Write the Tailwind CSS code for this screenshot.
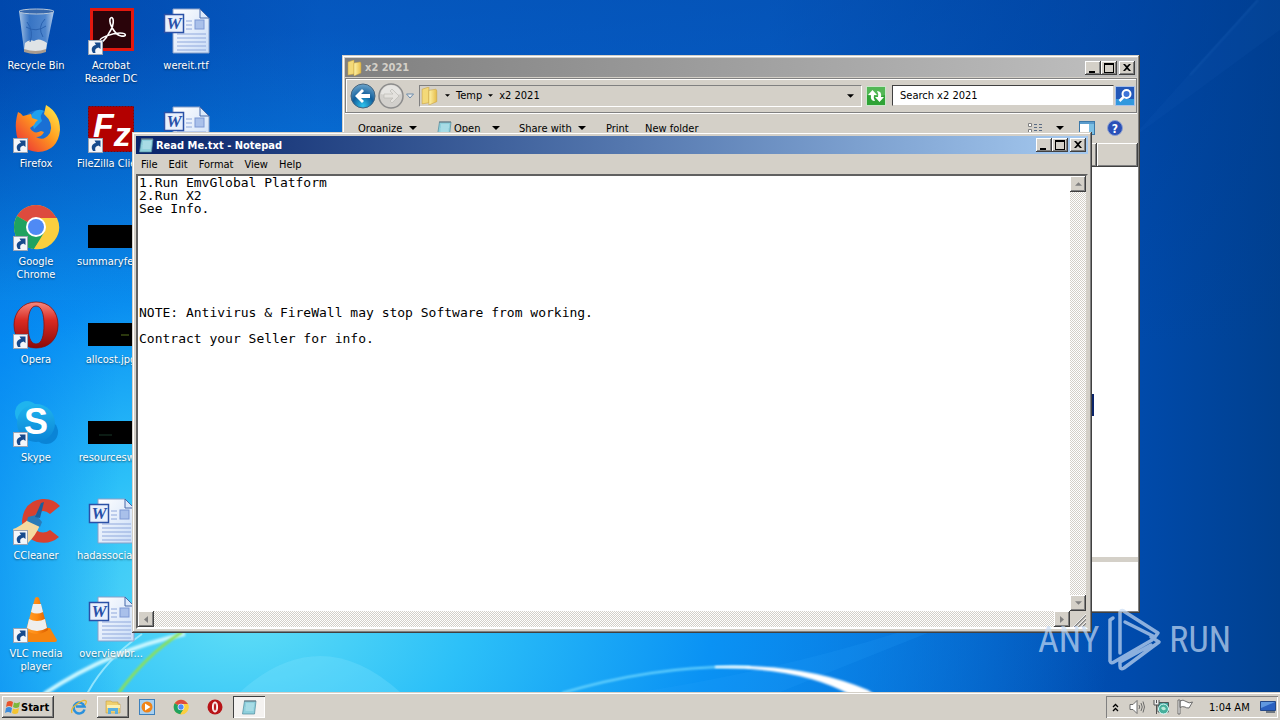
<!DOCTYPE html>
<html lang="en">
<head>
    <meta charset="UTF-8">
    <meta name="viewport" content="width=device-width, initial-scale=1.0">
    <title>Desktop</title>
    <script src="https://cdn.jsdelivr.net/npm/@tailwindcss/browser@4"></script>
    <style>
        body { font-family: 'DejaVu Sans Condensed', 'Noto Sans', sans-serif; }
    </style>
</head>
<body class="h-screen overflow-hidden flex flex-col bg-[#0a6ddc] text-[11px] leading-[13px] text-black">
    <!-- Shared icons -->
    <svg class="absolute size-0" xmlns="http://www.w3.org/2000/svg">
        <defs>
            <linearGradient id="g-opera" x1="0" y1="0" x2="0" y2="1"><stop offset="0" stop-color="#f58a80"/><stop offset=".4" stop-color="#d92a22"/><stop offset="1" stop-color="#8c0a08"/></linearGradient>
            <linearGradient id="g-page" x1="0" y1="0" x2="1" y2="1"><stop offset="0" stop-color="#ffffff"/><stop offset="1" stop-color="#c9dcf7"/></linearGradient>
            <linearGradient id="g-fox" x1="1" y1="0" x2="0" y2="1"><stop offset="0" stop-color="#fff44f"/><stop offset=".45" stop-color="#ff9a1e"/><stop offset="1" stop-color="#e8203c"/></linearGradient>
            <linearGradient id="g-glass" x1="0" y1="0" x2="1" y2="0"><stop offset="0" stop-color="#c8dcf0" stop-opacity=".85"/><stop offset=".3" stop-color="#4f86cc" stop-opacity=".7"/><stop offset=".75" stop-color="#6f9fda" stop-opacity=".7"/><stop offset="1" stop-color="#d8e8f8" stop-opacity=".85"/></linearGradient>
            <linearGradient id="g-cone" x1="0" y1="0" x2="1" y2="0"><stop offset="0" stop-color="#ffa030"/><stop offset=".5" stop-color="#ff8a10"/><stop offset="1" stop-color="#d85c00"/></linearGradient>
            <linearGradient id="g-folder" x1="0" y1="0" x2="1" y2="0"><stop offset="0" stop-color="#fff3a8"/><stop offset="1" stop-color="#e6bd4a"/></linearGradient>
            <linearGradient id="g-skype" x1="0" y1="0" x2="0" y2="1"><stop offset="0" stop-color="#1fb4ee"/><stop offset="1" stop-color="#0a84d6"/></linearGradient>
            <radialGradient id="g-back" cx=".5" cy=".9" r=".9"><stop offset="0" stop-color="#2ec4ee"/><stop offset=".5" stop-color="#125f9c"/><stop offset="1" stop-color="#6ea6cc"/></radialGradient>
        </defs>
        <symbol id="shortcut" viewBox="0 0 15 15">
            <rect x=".5" y=".5" width="14" height="14" fill="#f4f6fa" stroke="#9aa4b4"/>
            <path d="M5 13C2.500 9 4 5.500 8 5L6.500 2.500H12.500V9L10.500 7.500C7.500 8 6.500 10 7.500 13Z" fill="#174a8c"/>
        </symbol>
        <symbol id="bin" viewBox="0 0 48 48">
            <path d="M7 4L12 43Q24 48 34 43L42 4Z" fill="url(#g-glass)"/>
            <path d="M13 36Q17 32 22 34Q27 30 35 36L34 43Q24 47 12 43Z" fill="#dfe3e6"/>
            <path d="M12 42Q24 46 34 42L34 45Q24 49 12 45Z" fill="#a99c90"/>
            <ellipse cx="24.500" cy="4.500" rx="17.500" ry="2.500" fill="#3768ac" stroke="#b8c8da"/>
            <path d="M15 15Q22 24 18 35M33 12Q25 20 31 30M14 20Q24 26 34 19" stroke="#2a62b0" fill="none"/>
        </symbol>
        <symbol id="acrobat" viewBox="0 0 48 48">
            <rect x="3" y="1" width="44" height="43" fill="#e2180f"/>
            <rect x="6" y="4" width="38" height="37" fill="#2a040a"/>
            <path d="M23 12C26 7 29 16 22 26C19 32 14 37 13 34C12 31 25 26 33 26C40 26 40 30 34 29C28 28 22 17 23 12Z" fill="none" stroke="#fff" stroke-width="1.600"/>
        </symbol>
        <symbol id="word" viewBox="0 0 48 48">
            <path d="M11 2H38L47 11V46H11Z" fill="url(#g-page)" stroke="#8aa0c8"/>
            <path d="M38 2V11H47Z" fill="#dbe8fa" stroke="#4668a8"/>
            <path d="M24 14H30M24 18H30M24 22H30M15 27H44M15 31H44M15 35H44M15 39H44M15 43H44" stroke="#8fa8dc"/>
            <rect x="33" y="13" width="9" height="9" fill="#a9c0ea" stroke="#7c98d4"/>
            <rect x="2.500" y="7.500" width="19" height="18" fill="#e9f0fc" stroke="#2b51a6" stroke-width="1.500"/>
        </symbol>
        <symbol id="firefox" viewBox="0 0 48 48">
            <circle cx="27" cy="23" r="18" fill="#1a6fd4"/>
            <path d="M18 12Q24 2 32 6Q27 10 30 16L22 24Z" fill="#1fa0ee"/>
            <path d="M6 7Q9 8 11 11L19 9L20 13L26 15Q23 17 22 20L18 23Q22 30 29 26L32 27Q30 32 24 32Q32 37 38 28Q42 18 32 9L34 0Q48 8 48 25Q46 46 26 47Q5 45 4 25Q3 17 6 7Z" fill="url(#g-fox)"/>
        </symbol>
        <symbol id="filezilla" viewBox="0 0 48 48">
            <rect x="1.500" y="1.500" width="45" height="45" fill="#b30000" stroke="#8a0000" stroke-dasharray="2 1"/>
        </symbol>
        <symbol id="chrome" viewBox="0 0 48 48">
            <circle cx="24" cy="24" r="22" fill="#fbcf3f"/>
            <path d="M24 24L5 13A22 22 0 0 1 43 13L45 15H24Z" fill="#dd4b3e"/>
            <path d="M24 24L5 13A22 22 0 0 0 22 46L34 29Z" fill="#1fa260"/>
            <path d="M33 28L22 46A22 22 0 0 0 45 15H25Z" fill="#fbcf3f"/>
            <circle cx="24" cy="24" r="10" fill="#fff"/>
            <circle cx="24" cy="24" r="8" fill="#4f8af5"/>
        </symbol>
        <symbol id="opera" viewBox="0 0 48 48">
            <path fill-rule="evenodd" d="M24 1C37 1 46 10 46 24S37 47 24 47S2 37 2 24S11 1 24 1ZM24 5C18 5 16 14 16 24S18 43 24 43S32 34 32 24S30 5 24 5Z" fill="url(#g-opera)" stroke="#8a100c" stroke-width=".8"/>
        </symbol>
        <symbol id="skype" viewBox="0 0 48 48">
            <circle cx="15" cy="14" r="12" fill="#1fb4ee"/>
            <circle cx="34" cy="33" r="12" fill="#0a84d6"/>
            <circle cx="24" cy="24" r="19" fill="url(#g-skype)"/>
        </symbol>
        <symbol id="ccleaner" viewBox="0 0 48 48">
            <path d="M48 9L38 17Q31 11 24 17Q18 25 24 33Q31 38 38 33L47 40Q38 48 25 45Q10 40 10 24Q12 4 30 2Q41 1 48 9Z" fill="#d8412f"/>
            <path d="M18 21Q8 30 1 32Q4 43 16 46Q24 38 28 28Z" fill="#f5d9a0"/>
            <path d="M16 20L24 18L30 25L28 30L15 24Z" fill="#2a7bb8"/>
            <path d="M23 20L29 6L32 5L28 21Z" fill="#1c5f9c"/>
        </symbol>
        <symbol id="vlc" viewBox="0 0 48 48">
            <path d="M11 33H38L45 45Q45 47 43 47H5Q3 47 4 44Z" fill="#f58410"/>
            <path d="M23 3Q25 1 27 3L36 35Q25 43 14 35Z" fill="url(#g-cone)"/>
            <path d="M21 9H29L31 17Q25 20 19 17ZM17 24Q25 28 33 24L35 33Q25 39 15 33Z" fill="#eee"/>
        </symbol>
        <symbol id="black" viewBox="0 0 48 48"><rect x="1" y="22" width="47" height="23"/></symbol>
        <symbol id="black-allcost" viewBox="0 0 48 48"><rect x="1" y="22" width="47" height="23"/><path d="M34 34H42" stroke="#56701c"/></symbol>
        <symbol id="black-resources" viewBox="0 0 48 48"><rect x="1" y="22" width="47" height="23"/><path d="M12 36H25" stroke="#183828"/></symbol>
        <symbol id="folder" viewBox="0 0 16 16">
            <path d="M1 2L7 0V14L1 15Z" fill="#f3d978" stroke="#c9a23c" stroke-width=".5"/>
            <path d="M7 3L13 2Q14 2 14 4V13L7 16Z" fill="url(#g-folder)" stroke="#c9a23c" stroke-width=".5"/>
        </symbol>
        <symbol id="notepad" viewBox="0 0 16 16">
            <path d="M3.500 2H15L13.500 15H1.500Z" fill="#8fd0dc" stroke="#4d8a9c" stroke-width=".7"/>
            <path d="M5 5H13M5 7H13M4.500 9H12.500M4.500 11H12.500" stroke="#cdeef4" stroke-width=".8"/>
            <path d="M4 1V3M6 1V3M8 1V3M10 1V3M12 1V3M14 1V3" stroke="#6b7680"/>
        </symbol>
        <symbol id="min" viewBox="0 0 14 12"><path d="M3 9H9V11H3Z"/></symbol>
        <symbol id="max" viewBox="0 0 14 12"><path fill-rule="evenodd" d="M2 1H12V11H2ZM3 3V10H11V3Z"/></symbol>
        <symbol id="close" viewBox="0 0 14 12"><path d="M3 2H5L7 4L9 2H11L8 5.500L11 9H9L7 7L5 9H3L6 5.500Z"/></symbol>
        <symbol id="down" viewBox="0 0 8 4"><path d="M0 0H8L4 4Z"/></symbol>
    </svg>

    <main class="relative flex-1 min-h-0 overflow-hidden bg-[radial-gradient(ellipse_68%_84%_at_19%_88%,#62dff6_0%,#2cc0f8_26%,#0a92f4_54%,transparent_100%),linear-gradient(90deg,#0050bd_0%,#0869da_25%,#0864d0_60%,#004bad_88%,#00408f_100%)]">
        <!-- Wallpaper light streaks -->
        <svg class="absolute inset-0 size-full" viewBox="0 0 1280 692" preserveAspectRatio="none" fill="none">
            <defs>
                <linearGradient id="g-top" x1="0" y1="0" x2="0" y2="1"><stop offset="0" stop-color="#003c94" stop-opacity=".4"/><stop offset=".5" stop-color="#003c94" stop-opacity="0"/></linearGradient>
                <linearGradient id="g-left" x1="0" y1="0" x2="1" y2="0"><stop offset="0" stop-color="#0080f0" stop-opacity=".5"/><stop offset="1" stop-color="#0080f0" stop-opacity="0"/></linearGradient>
                <filter id="soft"><feGaussianBlur stdDeviation="1"/></filter>
            </defs>
            <rect width="1280" height="692" fill="url(#g-top)"/>
            <rect y="300" width="120" height="392" fill="url(#g-left)"/>
            <path d="M1130 140L1256 0H1280V30Z" fill="#2a74cc" opacity=".08"/>
            <path d="M1190 75L1258 0" stroke="#4a90dc" opacity=".3" filter="url(#soft)"/>
            <path d="M240 692Q320 620 400 692Z" fill="#8ae8ff" opacity=".25"/>
            <path d="M640 692Q780 670 900 632H930L780 692Z" fill="#30a8ff" opacity=".15"/>
            <path d="M44 694Q110 650 185 634" stroke="#c8f6ff" stroke-width="4" filter="url(#soft)"/>
            <path d="M87 694Q105 660 142 634" stroke="#a8eeff" stroke-width="2" opacity=".8"/>
            <path d="M118 694Q145 656 182 632" stroke="#8be05c" stroke-width="3" filter="url(#soft)"/>
            <path d="M562 693Q660 664 750 667" stroke="#70d8ff" stroke-width="2" filter="url(#soft)"/>
            <path d="M715 666Q805 663 868 690L880 698H856Q805 667 715 668Z" fill="#fff" filter="url(#soft)"/>
        </svg>

        <!-- Desktop icons -->
        <ul id="desktop-icons" class="relative grid grid-flow-col grid-rows-[repeat(7,98px)] auto-cols-[72px] gap-x-[3px] justify-start pt-[7px] text-white"></ul>

        <!-- Explorer window -->
        <section class="absolute left-[342px] top-[55px] w-[798px] h-[558px] flex flex-col p-[3px] bg-[#d4d0c8] shadow-[inset_-1px_-1px_0_#404040,inset_1px_1px_0_#d4d0c8,inset_-2px_-2px_0_#808080,inset_2px_2px_0_#fff]">
            <header class="h-[19px] shrink-0 flex items-center gap-[2px] px-[2px] bg-linear-to-r from-[#808080] to-[#c0c0c0]">
                <svg class="size-4"><use href="#folder"/></svg>
                <h2 class="flex-1 font-bold text-[#d4d0c8]">x2 2021</h2>
                <button aria-label="Minimize" class="w-4 h-[14px] bg-[#d4d0c8] shadow-[inset_-1px_-1px_0_#404040,inset_1px_1px_0_#fff,inset_-2px_-2px_0_#808080]"><svg class="w-[14px] h-3 mx-auto"><use href="#min"/></svg></button>
                <button aria-label="Maximize" class="-ml-[2px] w-4 h-[14px] bg-[#d4d0c8] shadow-[inset_-1px_-1px_0_#404040,inset_1px_1px_0_#fff,inset_-2px_-2px_0_#808080]"><svg class="w-[14px] h-3 mx-auto"><use href="#max"/></svg></button>
                <button aria-label="Close" class="w-4 h-[14px] bg-[#d4d0c8] shadow-[inset_-1px_-1px_0_#404040,inset_1px_1px_0_#fff,inset_-2px_-2px_0_#808080]"><svg class="w-[14px] h-3 mx-auto"><use href="#close"/></svg></button>
            </header>

            <nav class="mt-px h-[35px] shrink-0 flex items-center pl-1 pr-px border border-[#808080] shadow-[inset_1px_1px_0_#fff,0_1px_0_#fff]">
                <button aria-label="Back" class="size-[26px]"><svg viewBox="0 0 26 26"><circle cx="13" cy="13" r="12" fill="url(#g-back)" stroke="#45647e"/><path d="M5 13L12 6L14 8L11 11H20V15H11L14 18L12 20Z" fill="#fff"/></svg></button>
                <button aria-label="Forward" class="ml-[2px] size-[26px]"><svg viewBox="0 0 26 26"><circle cx="13" cy="13" r="12" fill="#d2d0cc" stroke="#8c8c8c" stroke-width="1.500"/><path d="M3 11A10 9 0 0 1 23 11Q13 14 3 11Z" fill="#e6e5e2"/><path d="M21 13L14 6L12 8L15 11H6V15H15L12 18L14 20Z" fill="#e4e2de" stroke="#bcbab5" stroke-width=".7"/></svg></button>
                <button aria-label="Recent pages" class="ml-[2px] w-2"><svg class="w-2 h-[6px]" viewBox="0 0 8 6"><path d="M.5 1H7.500L4 5Z" fill="#eee" stroke="#6c8caa"/></svg></button>
                <div class="ml-[5px] flex-1 h-[22px] flex items-center pl-px pr-[7px] border border-[#808080] border-r-[#fff] border-b-[#fff]">
                    <svg class="size-[18px]"><use href="#folder"/></svg>
                    <svg class="ml-[6px] w-[5px] h-[3px]"><use href="#down"/></svg>
                    <a href="#" class="ml-[6px]">Temp</a>
                    <svg class="ml-[6px] w-[5px] h-[3px]"><use href="#down"/></svg>
                    <a href="#" class="ml-[6px]">x2 2021</a>
                    <button aria-label="Previous locations" class="ml-auto"><svg class="w-[7px] h-1"><use href="#down"/></svg></button>
                </div>
                <button aria-label="Refresh" class="ml-1 size-5"><svg viewBox="0 0 20 20"><rect x=".5" y=".5" width="19" height="19" fill="#2fa336" stroke="#c8e6c8"/><path d="M1 1H19V9Q10 12 1 9Z" fill="#6cc46c" opacity=".6"/><path d="M9 15Q4 15 5 9H2L6.500 4L11 9H8Q7 12 9 15ZM11 5Q16 5 15 11H18L13.500 16L9 11H12Q13 8 11 5Z" fill="#fff"/></svg></button>
                <input type="text" aria-label="Search" value="Search x2 2021" class="ml-[6px] w-[222px] h-[21px] px-[7px] bg-white border border-[#404040] border-r-[#d4d0c8] border-b-[#d4d0c8] outline-none">
                <button aria-label="Go" class="ml-px size-5"><svg viewBox="0 0 20 20"><rect x=".5" y=".5" width="19" height="19" fill="#2357b8" stroke="#a8c0e8"/><path d="M1 13H19V19H1Z" fill="#38b4ee" opacity=".7"/><circle cx="11.500" cy="8" r="4" fill="#3d74d8" stroke="#fff" stroke-width="2"/><path d="M8.500 11L4.500 15" stroke="#fff" stroke-width="2.500"/></svg></button>
            </nav>

            <div class="h-[30px] shrink-0 flex items-center pl-[13px] pr-[14px]">
                <button class="w-[79px] flex items-center gap-[7px]">Organize <svg class="w-2 h-1"><use href="#down"/></svg></button>
                <button class="w-[82px] flex items-center gap-[2px]"><svg class="w-4 h-4 -ml-px"><use href="#notepad"/></svg>Open <svg class="ml-[10px] w-2 h-1"><use href="#down"/></svg></button>
                <button class="w-[87px] flex items-center gap-[6px]">Share with <svg class="w-2 h-1"><use href="#down"/></svg></button>
                <button class="w-[39px] text-left">Print</button>
                <button>New folder</button>
                <button aria-label="Views" class="ml-auto flex items-center gap-[13px]"><svg class="w-4 h-[10px]" viewBox="0 0 16 10"><path d="M1.500 .5H4.500V3.500H1.500ZM1.500 6.500H4.500V9.500H1.500Z" fill="#fff" stroke="#808080"/><path d="M7 1.500H10M12 1.500H15M7 4.500H10M12 4.500H15M7 7.500H10M12 7.500H15" stroke="#5a6c84"/></svg><svg class="w-2 h-1"><use href="#down"/></svg></button>
                <button aria-label="Preview pane" class="ml-[15px]"><svg class="w-4 h-[14px]" viewBox="0 0 16 14"><rect x=".5" y=".5" width="15" height="13" fill="#fff" stroke="#3c78a8"/><path d="M1 1H15V3H1Z" fill="#5a9ccc"/><path d="M10 3H15V13H10Z" fill="#7cc0e4"/></svg></button>
                <button aria-label="Help" class="ml-[12px] size-4"><svg viewBox="0 0 16 16"><circle cx="8" cy="8" r="7.500" fill="#2a50b8" stroke="#8ca0d0"/><text x="8" y="12.500" text-anchor="middle" font-size="12" font-weight="700" fill="#fff">?</text></svg></button>
            </div>

            <div class="-mr-px h-6 shrink-0 flex">
                <span class="w-[752px] shadow-[inset_-1px_-1px_0_#404040,inset_1px_1px_0_#fff,inset_-2px_-2px_0_#808080]"></span>
                <span class="flex-1 shadow-[inset_-1px_-1px_0_#404040,inset_1px_1px_0_#fff,inset_-2px_-2px_0_#808080]"></span>
            </div>
            <div class="-mr-px flex-1 bg-white pt-[227px]">
                <div class="w-[749px] h-[22px] bg-[#0a246a]"></div>
            </div>
            <footer class="-mr-px -mb-px h-[54px] shrink-0 bg-white border-t-[5px] border-[#d4d0c8]"></footer>
        </section>

        <!-- Notepad window -->
        <section class="absolute left-[132px] top-[132px] w-[960px] h-[501px] flex flex-col p-1 bg-[#d4d0c8] shadow-[inset_-1px_-1px_0_#404040,inset_1px_1px_0_#d4d0c8,inset_-2px_-2px_0_#808080,inset_2px_2px_0_#fff]">
            <header class="h-[18px] shrink-0 flex items-center gap-[2px] px-[2px] bg-linear-to-r from-[#0a246a] to-[#a6caf0]">
                <svg class="size-4"><use href="#notepad"/></svg>
                <h1 class="flex-1 font-bold text-white">Read Me.txt - Notepad</h1>
                <button aria-label="Minimize" class="w-4 h-[14px] bg-[#d4d0c8] shadow-[inset_-1px_-1px_0_#404040,inset_1px_1px_0_#fff,inset_-2px_-2px_0_#808080]"><svg class="w-[14px] h-3 mx-auto"><use href="#min"/></svg></button>
                <button aria-label="Maximize" class="-ml-[2px] w-4 h-[14px] bg-[#d4d0c8] shadow-[inset_-1px_-1px_0_#404040,inset_1px_1px_0_#fff,inset_-2px_-2px_0_#808080]"><svg class="w-[14px] h-3 mx-auto"><use href="#max"/></svg></button>
                <button aria-label="Close" class="w-4 h-[14px] bg-[#d4d0c8] shadow-[inset_-1px_-1px_0_#404040,inset_1px_1px_0_#fff,inset_-2px_-2px_0_#808080]"><svg class="w-[14px] h-3 mx-auto"><use href="#close"/></svg></button>
            </header>
            <nav class="h-5 shrink-0 flex items-center gap-[11px] pl-[5px]">
                <button>File</button>
                <button>Edit</button>
                <button>Format</button>
                <button>View</button>
                <button>Help</button>
            </nav>
            <div class="flex-1 min-h-0 grid grid-cols-[1fr_16px] grid-rows-[1fr_16px] border-2 border-t-[#606060] border-l-[#606060] border-r-[#d4d0c8] border-b-[#fff]">
                <textarea aria-label="Document" spellcheck="false" class="resize-none overflow-hidden whitespace-pre bg-white px-px font-['DejaVu_Sans_Mono',monospace] text-[13px] leading-[13px] outline-none">1.Run EmvGlobal Platform
2.Run X2
See Info.







NOTE: Antivirus &amp; FireWall may stop Software from working.

Contract your Seller for info.</textarea>
                <div class="flex flex-col justify-between bg-[repeating-conic-gradient(#ffffff_0_25%,#d4d0c8_0_50%)] bg-[length:2px_2px]">
                    <button aria-label="Scroll up" class="size-4 grid place-items-center bg-[#d4d0c8] shadow-[inset_-1px_-1px_0_#404040,inset_1px_1px_0_#fff,inset_-2px_-2px_0_#808080]"><svg class="w-[7px] h-1 rotate-180 fill-[#808080]"><use href="#down"/></svg></button>
                    <button aria-label="Scroll down" class="size-4 grid place-items-center bg-[#d4d0c8] shadow-[inset_-1px_-1px_0_#404040,inset_1px_1px_0_#fff,inset_-2px_-2px_0_#808080]"><svg class="w-[7px] h-1 fill-[#808080]"><use href="#down"/></svg></button>
                </div>
                <div class="flex justify-between bg-[repeating-conic-gradient(#ffffff_0_25%,#d4d0c8_0_50%)] bg-[length:2px_2px]">
                    <button aria-label="Scroll left" class="size-4 grid place-items-center bg-[#d4d0c8] shadow-[inset_-1px_-1px_0_#404040,inset_1px_1px_0_#fff,inset_-2px_-2px_0_#808080]"><svg class="w-1 h-[7px]" viewBox="0 0 4 7"><path d="M4 0V7L0 3.500Z" fill="#808080"/></svg></button>
                    <button aria-label="Scroll right" class="size-4 grid place-items-center bg-[#d4d0c8] shadow-[inset_-1px_-1px_0_#404040,inset_1px_1px_0_#fff,inset_-2px_-2px_0_#808080]"><svg class="w-1 h-[7px]" viewBox="0 0 4 7"><path d="M0 0V7L4 3.500Z" fill="#808080"/></svg></button>
                </div>
                <svg class="size-4" viewBox="0 0 16 16"><path d="M4 16L16 4M8 16L16 8M12 16L16 12" stroke="#808080" stroke-width="1.500"/><path d="M3 16L16 3M7 16L16 7M11 16L16 11" stroke="#fff" stroke-width=".8"/></svg>
            </div>
        </section>

        <!-- Watermark -->
        <div class="absolute right-[49px] bottom-5 h-[64px] flex items-center gap-[7px] text-[#c8dcf4]/70 font-['Roboto_Condensed','Liberation_Sans_Narrow','Liberation_Sans',sans-serif] text-[36px] leading-[36px]">
            <span>ANY</span>
            <svg class="w-[56px] h-[64px]" viewBox="0 0 56 64" fill="none" stroke="currentColor" stroke-width="3.500" stroke-linejoin="round" stroke-linecap="round">
                <path d="M7 10L4 12V53Q5 56 8 54L46 32M14 45V4Q16 1 19 4L52 25L49 29L19 14M45 29L53 34L18 60Q14 62 14 58V54L45 37"/>
            </svg>
            <span>RUN</span>
        </div>
    </main>

    <!-- Taskbar -->
    <footer class="h-7 shrink-0 flex items-center bg-[#d4d0c8] border-t border-[#d4d0c8] shadow-[inset_0_1px_0_#fff] pl-[2px] pr-[2px] pt-px">
        <button class="w-[52px] h-[22px] flex items-center pl-[2px] font-bold shadow-[inset_-1px_-1px_0_#404040,inset_1px_1px_0_#fff,inset_-2px_-2px_0_#808080]">
            <svg class="w-[17px] h-4 shrink-0" viewBox="0 0 17 16">
                <path d="M3 3Q6 1 9 3L8 8Q5 6 2 8Z" fill="#e8542c"/><path d="M10 3.500Q13 5 16 3L15 8Q12 10 9 8Z" fill="#7cb83c"/>
                <path d="M2 9Q5 7 8 9L7 14Q4 12 1 14Z" fill="#3c8cdc"/><path d="M9 9.500Q12 11 15 9L14 14Q11 16 8 14Z" fill="#f4c430"/>
            </svg>Start
        </button>
        <button aria-label="Internet Explorer" class="ml-[17px] size-4"><svg viewBox="0 0 16 16" fill="none"><path d="M13.500 10.500A5.500 5.500 0 1 1 13.500 7.500H5" stroke="#2a90dc" stroke-width="2.500"/><path d="M1 14Q-1 10 6 5Q13 0 15 2Q16 3 14 6" stroke="#e8b830" stroke-width="1.300"/></svg></button>
        <button aria-label="Windows Explorer" class="ml-[10px] w-8 h-[22px] grid place-items-center shadow-[inset_-1px_-1px_0_#404040,inset_1px_1px_0_#fff,inset_-2px_-2px_0_#808080]">
            <svg class="size-4" viewBox="0 0 16 16"><path d="M1 2H6L7 3H13V5H15V14H1Z" fill="#f0d070" stroke="#c8a040" stroke-width=".6"/><path d="M2 6H15V9H2Z" fill="#fdf0b0"/><path d="M3 9H13V15H10V12H6V15H3Z" fill="#5cb0e0"/></svg>
        </button>
        <button aria-label="Windows Media Player" class="ml-[10px] size-4"><svg viewBox="0 0 16 16"><rect x=".5" y=".5" width="15" height="15" fill="#a8d0f0" stroke="#3c80bc"/><circle cx="8" cy="8" r="5.500" fill="#f08418"/><path d="M6 4.500L11.500 8L6 11.500Z" fill="#fff"/></svg></button>
        <button aria-label="Google Chrome" class="ml-[18px] size-4"><svg class="size-full"><use href="#chrome"/></svg></button>
        <button aria-label="Opera" class="ml-[18px] size-4"><svg viewBox="0 0 16 16"><circle cx="8" cy="8" r="7.500" fill="#b81418"/><ellipse cx="8" cy="8" rx="2.500" ry="5" fill="#f4d8d8" stroke="#fff"/><ellipse cx="8" cy="8" rx="1" ry="3.500" fill="#b81418"/></svg></button>
        <button aria-label="Notepad" class="ml-[10px] w-8 h-[22px] grid place-items-center bg-[#f4f2f0] shadow-[inset_1px_1px_0_#404040,inset_-1px_-1px_0_#fff]"><svg class="w-[18px] h-4"><use href="#notepad"/></svg></button>

        <div class="ml-auto h-[22px] w-[172px] flex items-center pl-[6px] pr-[2px] shadow-[inset_1px_1px_0_#808080,inset_-1px_-1px_0_#fff]">
            <button aria-label="Show hidden icons" class="w-[7px]"><svg class="w-[7px] h-[9px]" viewBox="0 0 7 9" fill="none" stroke="#000" stroke-width="1.300"><path d="M1 4L3.500 1.500L6 4M1 8L3.500 5.500L6 8"/></svg></button>
            <button aria-label="Volume" class="ml-[10px] size-4"><svg viewBox="0 0 16 16" fill="none" stroke="#606060" stroke-width=".9"><path d="M1 5.500H4L8 1.500V14.500L4 10.500H1Z" fill="#fff"/><path d="M10 6Q11.500 8 10 10M12 4Q14.500 8 12 12M14 2.500Q17 8 14 13.500"/></svg></button>
            <button aria-label="Network" class="ml-2 size-4"><svg viewBox="0 0 16 16"><path d="M5 3.500H15.500V13H5Z" fill="#3a9c94" stroke="#404040" stroke-width=".8"/><circle cx="10.500" cy="10" r="5" fill="#48b09c" stroke="#dff"/><path d="M8 9Q11 6 13 10Q10 13 8 9Z" fill="#b8e8d8"/><path d="M1 1V6H6V1M3.500 1V4M3.500 6V15" fill="#eee" stroke="#505050"/></svg></button>
            <button aria-label="Action Center" class="ml-2 size-4"><svg viewBox="0 0 16 16" fill="#fff" stroke="#606060" stroke-width=".9"><path d="M1 1H3V15H1ZM3 2Q6 0 9 2.500Q12 5 15.500 3L12 9Q9 9 8 8Q5 7 3 8.500Z"/></svg></button>
            <time class="ml-4">1:04 AM</time>
            <button aria-label="Show desktop" class="ml-auto"><svg class="w-4 h-3" viewBox="0 0 16 12"><path d="M.5 .5H15.500V9.500H.5Z" fill="#2a60c0" stroke="#244888"/><path d="M1 1H15L1 7Z" fill="#6098e0"/><path d="M6 10H15V12H6Z" fill="#707880"/></svg></button>
        </div>
    </footer>

    <script>
    // --- Letters that sit on top of some icons ---
    const marks = {
        word: '<text x="12" y="22" text-anchor="middle" font-family="Liberation Serif, serif" font-weight="700" font-style="italic" font-size="17" fill="#2850a8">W</text>',
        skype: '<text x="24" y="35" text-anchor="middle" font-family="Liberation Sans, sans-serif" font-weight="700" font-size="36" fill="#fff">S</text>',
        filezilla: '<text x="6" y="32" font-family="Liberation Sans, sans-serif" font-weight="700" font-style="italic" font-size="34" fill="#fff">F<tspan dy="9">z</tspan></text>'
    };

    // --- Desktop items, column by column ---
    const items = [
        { icon: 'bin', label: 'Recycle Bin' },
        { icon: 'firefox', label: 'Firefox', shortcut: true },
        { icon: 'chrome', label: 'Google Chrome', shortcut: true },
        { icon: 'opera', label: 'Opera', shortcut: true },
        { icon: 'skype', label: 'Skype', shortcut: true },
        { icon: 'ccleaner', label: 'CCleaner', shortcut: true },
        { icon: 'vlc', label: 'VLC media player', shortcut: true },
        { icon: 'acrobat', label: 'Acrobat Reader DC', shortcut: true },
        { icon: 'filezilla', label: 'FileZilla&nbsp;Clie...', shortcut: true },
        { icon: 'black', label: 'summaryfee...' },
        { icon: 'black-allcost', label: 'allcost.jpg' },
        { icon: 'black-resources', label: 'resourcesw...' },
        { icon: 'word', label: 'hadassociat...' },
        { icon: 'word', label: 'overviewbr...' },
        { icon: 'word', label: 'wereit.rtf' },
        { icon: 'word', label: '' }
    ];
    document.getElementById('desktop-icons').innerHTML = items.map(item => `
        <li class="flex flex-col items-center">
            <span class="relative size-12">
                <svg class="size-12" viewBox="0 0 48 48"><use href="#${item.icon}" width="48" height="48"/>${marks[item.icon] || ''}</svg>
                ${item.shortcut ? '<svg class="absolute left-[1px] bottom-0 size-[15px]"><use href="#shortcut"/></svg>' : ''}
            </span>
            <span class="mt-1 w-[68px] text-center [text-shadow:0_1px_2px_#0008]">${item.label}</span>
        </li>
    `).join('');
    </script>
</body>
</html>
